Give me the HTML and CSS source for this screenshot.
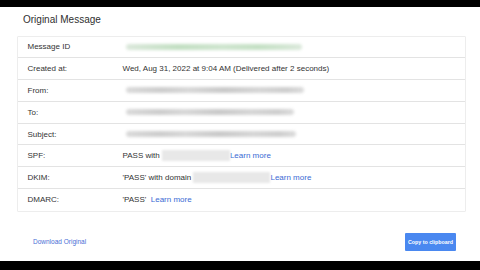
FILE: index.html
```html
<!DOCTYPE html>
<html>
<head>
<meta charset="utf-8">
<link rel="stylesheet" href="styles.css">
</head>
<body>
<div class="bar"></div>
<main class="page">
  <h1 class="title">Original Message</h1>
  <div class="card">
    <div class="row"><div class="label">Message ID</div><div class="value"><span class="blur green" style="width:176px"></span></div></div>
    <div class="row"><div class="label">Created at:</div><div class="value">Wed, Aug 31, 2022 at 9:04 AM (Delivered after 2 seconds)</div></div>
    <div class="row"><div class="label">From:</div><div class="value"><span class="blur" style="width:178px"></span></div></div>
    <div class="row"><div class="label">To:</div><div class="value"><span class="blur" style="width:168px"></span></div></div>
    <div class="row"><div class="label">Subject:</div><div class="value"><span class="blur" style="width:170px"></span></div></div>
    <div class="row"><div class="label">SPF:</div><div class="value">PASS with <span class="box" style="width:68px"></span> <a class="link">Learn more</a></div></div>
    <div class="row"><div class="label">DKIM:</div><div class="value">'PASS' with domain <span class="box" style="width:77px"></span> <a class="link">Learn more</a></div></div>
    <div class="row"><div class="label">DMARC:</div><div class="value">'PASS' &nbsp;<a class="link">Learn more</a></div></div>
  </div>
  <div class="footer">
    <a class="download">Download Original</a>
    <button class="copy">Copy to clipboard</button>
  </div>
</main>
<div class="bar"></div>
</body>
</html>
```
FILE: styles.css
```css
html, body {
  margin: 0;
  padding: 0;
  background: #000;
}
body {
  width: 480px;
  height: 270px;
  overflow: hidden;
  font-family: "Liberation Sans", Arial, sans-serif;
  color: #333;
}
.bar {
  height: 7px;
  background: #000;
}
.page {
  background: #fff;
  height: 254px;
  box-sizing: border-box;
  padding-top: 7px;
}
.title {
  margin: 0 0 9.5px 23px;
  font-size: 10px;
  line-height: 12px;
  font-weight: normal;
  color: #2f2f2f;
}
.card {
  margin-left: 17px;
  width: 449px;
  box-sizing: border-box;
  border: 1px solid #ededed;
  border-radius: 1px;
}
.row {
  display: flex;
  align-items: center;
  height: 21.8px;
  box-sizing: border-box;
  border-bottom: 1px solid #e3e3e3;
  font-size: 8px;
  color: #333;
}
.row:last-child {
  border-bottom: none;
}
.label {
  width: 95px;
  padding-left: 9.5px;
  flex: none;
}
.value {
  display: flex;
  align-items: center;
  white-space: pre;
}
.blur {
  display: inline-block;
  height: 6px;
  margin-left: 3px;
  border-radius: 3px;
  background: linear-gradient(90deg, #dadada, #cdcdcd 20%, #d8d8d8 35%, #c9c9c9 55%, #d6d6d6 75%, #cecece 90%, #dcdcdc);
  filter: blur(1.8px);
}
.blur.green {
  background: linear-gradient(90deg, #dbe8db, #c2dfc2 30%, #cfe5cf 55%, #c4e0c4 75%, #dbe9db);
}
.box {
  display: inline-block;
  height: 11px;
  background: #e8e8e8;
  filter: blur(1px);
}
.link {
  color: #3a6ad4;
}
.footer {
  display: flex;
  justify-content: space-between;
  align-items: center;
  margin-top: 21px;
  padding: 0 24px 0 33px;
}
.download {
  font-size: 6.5px;
  color: #4a6fd6;
}
.copy {
  width: 51px;
  height: 18px;
  padding: 0;
  border: none;
  border-radius: 1px;
  background: #4a88f0;
  color: #fff;
  font-family: "Liberation Sans", Arial, sans-serif;
  font-size: 5.3px;
  font-weight: bold;
}
```
